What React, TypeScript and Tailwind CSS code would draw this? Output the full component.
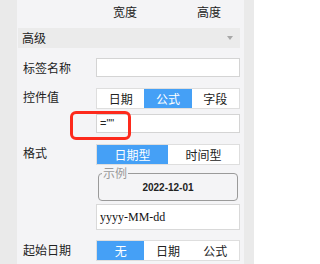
import React from 'react';

const cjk = { fontFamily: '"Noto Sans CJK SC", "Noto Sans", sans-serif' };

const Segmented = ({ items, active }: { items: string[]; active: number }) => (
  <div className="flex h-[21px] w-[144px] border border-[#dedede] bg-white text-[12px] leading-[19px] text-[#222]">
    {items.map((item, i) => (
      <div
        key={item}
        className={`flex-1 text-center ${i === active ? 'bg-[#45a0f6] text-white' : ''}`}
      >
        {item}
      </div>
    ))}
  </div>
);

const Label = ({ text }: { text: string }) => (
  <div className="w-[78px] shrink-0 pl-[5px] text-[12px] leading-[16px] text-[#222]">{text}</div>
);

const App = () => {
  return (
    <div className="relative flex h-[264px] w-[254px] overflow-hidden bg-[#f4f4f6]" style={cjk}>
      <div className="w-[17px] shrink-0 bg-[#eaeaea]" />
      <div className="w-[227px] shrink-0 pl-px">
        <div className="flex h-[28px] items-start pt-[4px] text-[12px] leading-[16px] text-[#222]">
          <span className="ml-[95px]">宽度</span>
          <span className="ml-[60px]">高度</span>
        </div>

        <div className="flex h-[20px] w-[222px] items-center justify-between bg-[#ebebeb] pl-[4px] pr-[7px] text-[12px] text-[#222]">
          <span>高级</span>
          <span className="h-0 w-0 border-x-[3px] border-t-[4px] border-x-transparent border-t-[#a8a8a8]" />
        </div>

        <div className="mt-[10px] flex items-center">
          <Label text="标签名称" />
          <div className="h-[19px] w-[144px] border border-[#d4d4d4] bg-white" />
        </div>

        <div className="mt-[11px] flex items-start">
          <div className="pt-[1px]">
            <Label text="控件值" />
          </div>
          <Segmented items={['日期', '公式', '字段']} active={1} />
        </div>

        <div className="mt-[5px] flex">
          <div className="w-[78px] shrink-0" />
          <div
            className="h-[19px] w-[144px] border border-[#d4d4d4] bg-white pl-[3px] text-[11px] leading-[17px] text-[#222]"
            style={{ fontFamily: '"Liberation Sans", sans-serif' }}
          >
            =""
          </div>
        </div>

        <div className="mt-[11px] flex items-start">
          <div className="pt-[1px]">
            <Label text="格式" />
          </div>
          <Segmented items={['日期型', '时间型']} active={0} />
        </div>

        <div className="mt-[2px] flex">
          <div className="w-[80px] shrink-0" />
          <fieldset className="h-[34px] w-[140px] rounded-[4px] border border-[#9a9a9a] px-[3px]">
            <legend className="px-px text-[12px] leading-[12px] text-[#9a9a9a]">示例</legend>
            <div
              className="pt-[3px] text-center text-[10px] font-semibold leading-[12px] text-[#222]"
              style={{ fontFamily: '"Liberation Sans", sans-serif' }}
            >
              2022-12-01
            </div>
          </fieldset>
        </div>

        <div className="mt-[3px] flex">
          <div className="w-[78px] shrink-0" />
          <div
            className="h-[26px] w-[144px] border border-[#d9d9d9] bg-white pl-[3px] text-[12px] leading-[24px] text-[#111]"
            style={{ fontFamily: '"Liberation Serif", serif' }}
          >
            yyyy-MM-dd
          </div>
        </div>

        <div className="mt-[10px] flex items-start">
          <div className="pt-[2px]">
            <Label text="起始日期" />
          </div>
          <Segmented items={['无', '日期', '公式']} active={0} />
        </div>
      </div>
      <div className="flex-1 bg-[#eaeaea]" />

      <div className="absolute left-[70px] top-[111px] h-[29px] w-[61px] rounded-[6px] border-[3px] border-[#fd2a1c]" />
    </div>
  );
};

export default App;
